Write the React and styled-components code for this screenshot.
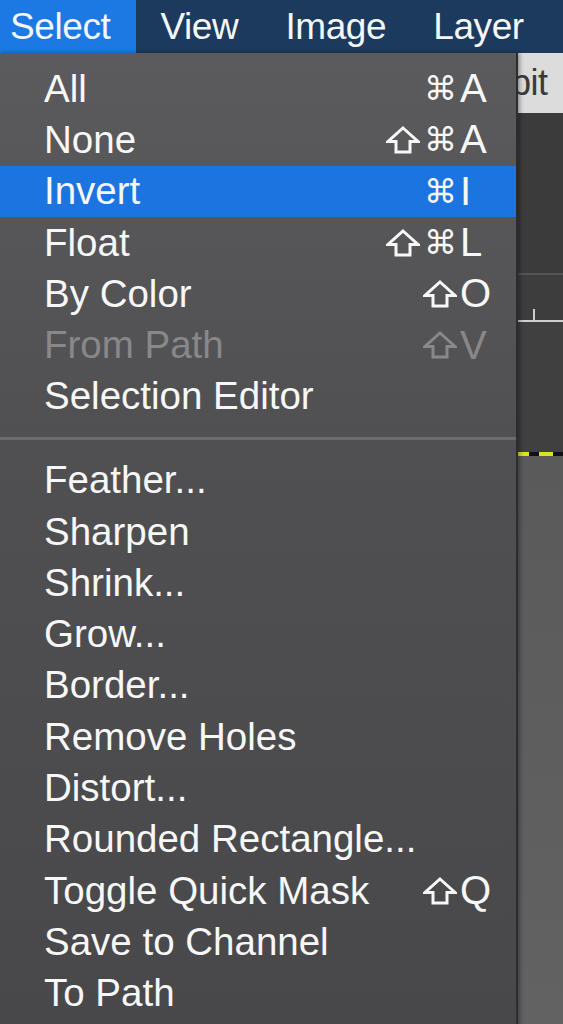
import React from "react";
import styled, { createGlobalStyle } from "styled-components";

const GlobalStyle = createGlobalStyle`
  html, body { margin: 0; padding: 0; background: #3c3c3c; }
  body { font-family: "Liberation Sans", Arial, sans-serif; -webkit-font-smoothing: antialiased; }
`;

const Screen = styled.div`
  position: relative;
  width: 563px;
  height: 1024px;
  overflow: hidden;
  display: flex;
  flex-direction: column;
  background: #3c3c3c;
`;

const MenuBar = styled.div`
  height: 53px;
  flex: 0 0 53px;
  background: #1c3a5d;
  display: flex;
  align-items: stretch;
`;

const MenuTitle = styled.div`
  display: flex;
  align-items: center;
  padding: 0 ${(p) => (p.$first ? "26px" : "23px")} 0 ${(p) => (p.$first ? "10px" : "24px")};
  background: ${(p) => (p.$active ? "#1c78e2" : "transparent")};
  color: #f4f6f8;
  font-size: 37px;
  letter-spacing: -0.4px;
  white-space: nowrap;
`;

const Workspace = styled.div`
  flex: 1;
  display: flex;
  flex-direction: column;
`;

const OptionsStrip = styled.div`
  height: 60px;
  background: #dcdcdc;
  display: flex;
  align-items: center;
  padding-left: 511px;
  color: #3a3a3a;
  font-size: 36px;
  letter-spacing: -0.5px;
  white-space: nowrap;
`;

const DarkPanel = styled.div`
  height: ${(p) => p.$h}px;
  background: ${(p) => p.$bg};
  border-bottom: ${(p) => p.$line || "none"};
  position: relative;
`;

const Tick = styled.div`
  position: absolute;
  left: 533px;
  bottom: 0;
  width: 2px;
  height: 11px;
  background: #cfcfcf;
`;

const MarchingAnts = styled.div`
  height: 4px;
  background: repeating-linear-gradient(
    90deg,
    #d8e41c 0 14px,
    #111 14px 24px
  );
  margin-left: 515px;
`;

const ImageArea = styled.div`
  flex: 1;
  background: linear-gradient(180deg, #5a5a5a, #626262);
`;

const Menu = styled.div`
  position: absolute;
  top: 53px;
  left: 0;
  width: 516px;
  padding: 10px 0 10px;
  background: linear-gradient(180deg, #5b5b5d 0%, #505052 40%, #48484a 100%);
  border-right: 2px solid #2c2c2e;
  box-shadow: 2px 0 4px rgba(0, 0, 0, 0.35);
`;

const Item = styled.div`
  height: 51.3px;
  display: flex;
  align-items: center;
  padding: 0 20px 0 44px;
  font-size: 38.5px;
  white-space: nowrap;
  color: ${(p) => (p.$disabled ? "#88888a" : "#f7f7f7")};
  background: ${(p) => (p.$active ? "#1c74e0" : "transparent")};
`;

const Label = styled.span`
  flex: 1;
`;

const Shortcut = styled.span`
  display: flex;
  align-items: center;
  gap: 3px;
`;

const Mods = styled.span`
  display: flex;
  align-items: center;
  justify-content: flex-end;
  gap: 4px;
`;

const Cmd = styled.span`
  font-family: "DejaVu Sans", sans-serif;
  font-size: 33px;
  line-height: 1;
`;

const Key = styled.span`
  width: 36px;
  font-size: 40px;
  text-align: left;
`;

const Separator = styled.div`
  height: 3px;
  margin: 15px 0 14.5px;
  background: #6c6c6e;
`;

function ShiftIcon() {
  return (
    <svg width="34" height="28" viewBox="0 0 34 28" aria-hidden="true">
      <path
        d="M17 2 L32 15.5 L24 15.5 L24 26 L10 26 L10 15.5 L2 15.5 Z"
        fill="none"
        stroke="currentColor"
        strokeWidth="3"
        strokeLinejoin="miter"
      />
    </svg>
  );
}

const group1 = [
  { label: "All", cmd: true, key: "A" },
  { label: "None", shift: true, cmd: true, key: "A" },
  { label: "Invert", cmd: true, key: "I", active: true },
  { label: "Float", shift: true, cmd: true, key: "L" },
  { label: "By Color", shift: true, key: "O" },
  { label: "From Path", shift: true, key: "V", disabled: true },
  { label: "Selection Editor" },
];

const group2 = [
  { label: "Feather..." },
  { label: "Sharpen" },
  { label: "Shrink..." },
  { label: "Grow..." },
  { label: "Border..." },
  { label: "Remove Holes" },
  { label: "Distort..." },
  { label: "Rounded Rectangle..." },
  { label: "Toggle Quick Mask", shift: true, key: "Q" },
  { label: "Save to Channel" },
  { label: "To Path" },
];

function MenuRow({ item }) {
  return (
    <Item $active={item.active} $disabled={item.disabled}>
      <Label>{item.label}</Label>
      {item.key && (
        <Shortcut>
          <Mods>
            {item.shift && <ShiftIcon />}
            {item.cmd && <Cmd>⌘</Cmd>}
          </Mods>
          <Key>{item.key}</Key>
        </Shortcut>
      )}
    </Item>
  );
}

export default function App() {
  return (
    <>
      <GlobalStyle />
      <Screen>
        <MenuBar>
          <MenuTitle $first $active>Select</MenuTitle>
          <MenuTitle>View</MenuTitle>
          <MenuTitle>Image</MenuTitle>
          <MenuTitle>Layer</MenuTitle>
        </MenuBar>
        <Workspace>
          <OptionsStrip>bit</OptionsStrip>
          <DarkPanel $h={160} $bg="#3b3b3b" $line="2px solid #555" />
          <DarkPanel $h={45} $bg="#3d3d3d" $line="2px solid #cfcfcf">
            <Tick />
          </DarkPanel>
          <DarkPanel $h={130} $bg="#404040" />
          <MarchingAnts />
          <ImageArea />
        </Workspace>
        <Menu>
          {group1.map((it) => (
            <MenuRow key={it.label} item={it} />
          ))}
          <Separator />
          {group2.map((it) => (
            <MenuRow key={it.label} item={it} />
          ))}
        </Menu>
      </Screen>
    </>
  );
}
